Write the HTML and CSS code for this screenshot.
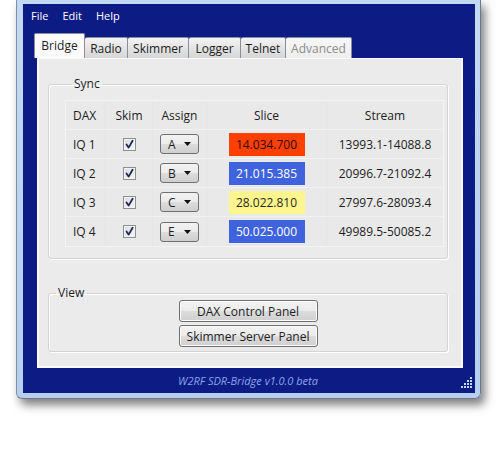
FILE: index.html
```html
<!DOCTYPE html>
<html>
<head>
<meta charset="utf-8">
<link rel="stylesheet" href="styles.css">
</head>
<body>
<div class="window">
  <div class="client">
    <div class="menubar">
      <span class="menu">File</span>
      <span class="menu">Edit</span>
      <span class="menu">Help</span>
    </div>
    <div class="tabs">
      <div class="tab selected t-bridge">Bridge</div>
      <div class="tab t-radio">Radio</div>
      <div class="tab t-skimmer">Skimmer</div>
      <div class="tab t-logger">Logger</div>
      <div class="tab t-telnet">Telnet</div>
      <div class="tab disabled t-adv">Advanced</div>
    </div>
    <div class="panel">
      <fieldset class="group sync">
        <legend>Sync</legend>
        <div class="grid">
          <div class="cell head c-dax">DAX</div>
          <div class="cell head c-mid">Skim</div>
          <div class="cell head c-mid">Assign</div>
          <div class="cell head c-mid">Slice</div>
          <div class="cell head c-mid">Stream</div>

          <div class="cell c-dax">IQ 1</div>
          <div class="cell c-mid"><span class="check"><svg width="11" height="11" viewBox="0 0 11 11"><path d="M2.5 5.5 L4.6 8.6 L8.6 1.8" fill="none" stroke="#1f2a52" stroke-width="1.8" stroke-linecap="round" stroke-linejoin="round"/></svg></span></div>
          <div class="cell c-mid"><span class="combo"><span>A</span><svg width="7" height="4" viewBox="0 0 7 4"><path d="M0 0 H7 L3.5 4 Z" fill="#111"/></svg></span></div>
          <div class="cell c-mid"><span class="slice s-orange">14.034.700</span></div>
          <div class="cell c-mid">13993.1-14088.8</div>

          <div class="cell c-dax">IQ 2</div>
          <div class="cell c-mid"><span class="check"><svg width="11" height="11" viewBox="0 0 11 11"><path d="M2.5 5.5 L4.6 8.6 L8.6 1.8" fill="none" stroke="#1f2a52" stroke-width="1.8" stroke-linecap="round" stroke-linejoin="round"/></svg></span></div>
          <div class="cell c-mid"><span class="combo"><span>B</span><svg width="7" height="4" viewBox="0 0 7 4"><path d="M0 0 H7 L3.5 4 Z" fill="#111"/></svg></span></div>
          <div class="cell c-mid"><span class="slice s-blue">21.015.385</span></div>
          <div class="cell c-mid">20996.7-21092.4</div>

          <div class="cell c-dax">IQ 3</div>
          <div class="cell c-mid"><span class="check"><svg width="11" height="11" viewBox="0 0 11 11"><path d="M2.5 5.5 L4.6 8.6 L8.6 1.8" fill="none" stroke="#1f2a52" stroke-width="1.8" stroke-linecap="round" stroke-linejoin="round"/></svg></span></div>
          <div class="cell c-mid"><span class="combo"><span>C</span><svg width="7" height="4" viewBox="0 0 7 4"><path d="M0 0 H7 L3.5 4 Z" fill="#111"/></svg></span></div>
          <div class="cell c-mid"><span class="slice s-yellow">28.022.810</span></div>
          <div class="cell c-mid">27997.6-28093.4</div>

          <div class="cell c-dax last">IQ 4</div>
          <div class="cell c-mid last"><span class="check"><svg width="11" height="11" viewBox="0 0 11 11"><path d="M2.5 5.5 L4.6 8.6 L8.6 1.8" fill="none" stroke="#1f2a52" stroke-width="1.8" stroke-linecap="round" stroke-linejoin="round"/></svg></span></div>
          <div class="cell c-mid last"><span class="combo"><span>E</span><svg width="7" height="4" viewBox="0 0 7 4"><path d="M0 0 H7 L3.5 4 Z" fill="#111"/></svg></span></div>
          <div class="cell c-mid last"><span class="slice s-blue">50.025.000</span></div>
          <div class="cell c-mid last">49989.5-50085.2</div>
        </div>
      </fieldset>
      <fieldset class="group view">
        <legend>View</legend>
        <div class="buttons">
          <div class="button">DAX Control Panel</div>
          <div class="button">Skimmer Server Panel</div>
        </div>
      </fieldset>
    </div>
    <div class="footer">
      <span></span>
      <span class="status">W2RF SDR-Bridge v1.0.0 beta</span>
      <svg class="grip" width="12" height="12" viewBox="0 0 12 12">
        <g fill="#c6d6f6">
          <rect x="9" y="0" width="2" height="2"/>
          <rect x="6" y="3" width="2" height="2"/><rect x="9" y="3" width="2" height="2"/>
          <rect x="3" y="6" width="2" height="2"/><rect x="6" y="6" width="2" height="2"/><rect x="9" y="6" width="2" height="2"/>
          <rect x="0" y="9" width="2" height="2"/><rect x="3" y="9" width="2" height="2"/><rect x="6" y="9" width="2" height="2"/><rect x="9" y="9" width="2" height="2"/>
        </g>
      </svg>
    </div>
  </div>
</div>
</body>
</html>
```
FILE: styles.css
```css
html, body {
  margin: 0;
  padding: 0;
  background: #ffffff;
}
body {
  width: 499px;
  height: 456px;
  overflow: hidden;
  font-family: "Open Sans", "Noto Sans", "Liberation Sans", sans-serif;
  font-size: 11.5px;
  color: #1e1e1e;
}
.window {
  box-sizing: border-box;
  margin-left: 16px;
  width: 465px;
  height: 399px;
  padding: 4px 5px 5px 6px;
  background: linear-gradient(#c3d9f3, #b6cfee);
  border-left: 1px solid #7f8fa6;
  border-right: 1px solid #6c7a8e;
  border-bottom: 1px solid #6c7a8e;
  border-radius: 0 0 6px 6px;
  box-shadow: 4px 6px 10px rgba(0, 0, 0, 0.5);
}
.client {
  height: 389px;
  background: #0d1b84;
  display: flex;
  flex-direction: column;
}
.menubar {
  height: 22px;
  display: flex;
  align-items: center;
  padding-left: 8px;
  gap: 14px;
  color: #ffffff;
  font-size: 11px;
}
.tabs {
  display: flex;
  align-items: flex-end;
  margin-top: 7px;
  margin-left: 11px;
  height: 25px;
}
.tab {
  box-sizing: border-box;
  height: 21px;
  border: 1px solid #8a8e98;
  border-bottom: none;
  border-left: none;
  border-radius: 2px 2px 0 0;
  background: linear-gradient(#f3f3f3, #e4e4e4 50%, #d6d6d6);
  display: flex;
  align-items: center;
  justify-content: center;
  padding-top: 1px;
  font-size: 12px;
}
.tab.selected {
  height: 25px;
  border-left: 1px solid #8a8e98;
  background: #fbfbfb;
  padding-top: 0;
  padding-bottom: 2px;
}
.t-bridge { width: 51px; }
.t-radio { width: 43px; }
.t-skimmer { width: 61px; }
.t-logger { width: 52px; }
.t-telnet { width: 45px; }
.t-adv { width: 66px; }
.tab.disabled {
  color: #8c8c8c;
  background: linear-gradient(#f7f7f7, #eeeeee);
}
.panel {
  box-sizing: border-box;
  margin-left: 14px;
  width: 426px;
  height: 310px;
  background: #ebebeb;
  border: 2px solid #fbfbfb;
  border-top: 1px solid #fbfbfb;
  padding: 17px 13px 0 9px;
  display: flex;
  flex-direction: column;
  gap: 26px;
}
.group {
  margin: 0;
  border: 1px solid #d3d3d3;
  border-radius: 3px;
  box-shadow: inset 1px 1px 0 #ffffff, 1px 1px 0 #ffffff;
  padding: 0;
  min-width: 0;
}
.group legend {
  padding: 0 2px;
  margin-left: 7px;
  font-size: 12px;
  line-height: 16px;
  color: #1e1e1e;
}
.sync {
  height: 183px;
  box-sizing: border-box;
  padding: 8px 6px 6px 16px;
}
.grid {
  display: grid;
  grid-template-columns: 40px 47px 54px 120px 116px;
  grid-template-rows: 29px repeat(4, 29px);
  width: 377px;
  border: 1px solid #f4f4f4;
  background: #e9e9e9;
}
.cell {
  display: flex;
  align-items: center;
  border-bottom: 1px solid #f2f2f2;
  border-right: 1px solid #e5e5e5;
  font-size: 12px;
}
.cell.last {
  border-bottom: none;
}
.cell:nth-child(5n) {
  border-right: none;
}
.c-dax {
  padding-left: 7px;
}
.c-mid {
  justify-content: center;
}
.check {
  box-sizing: border-box;
  width: 13px;
  height: 13px;
  border: 1px solid #8e8f8f;
  background: linear-gradient(135deg, #dcdcdc, #f6f6f6);
  box-shadow: inset 0 0 0 1px #f4f4f4;
  display: flex;
  align-items: center;
  justify-content: center;
}
.combo {
  box-sizing: border-box;
  width: 39px;
  height: 20px;
  border: 1px solid #707070;
  border-radius: 3px;
  background: linear-gradient(#f2f2f2, #ebebeb 50%, #dddddd 50%, #cfcfcf);
  display: flex;
  align-items: center;
  justify-content: space-between;
  padding: 0 7px 0 7px;
  font-size: 12px;
}
.slice {
  box-sizing: border-box;
  width: 76px;
  height: 23px;
  display: flex;
  align-items: center;
  justify-content: center;
  font-size: 12px;
}
.s-orange { background: #ff4000; color: #2e0a00; }
.s-blue { background: #3f63dd; color: #ffffff; }
.s-yellow { background: #fff58e; color: #2a2a1a; }
.view {
  height: 67px;
  box-sizing: border-box;
  padding: 0 0 5px 0;
}
.buttons {
  display: flex;
  flex-direction: column;
  align-items: center;
  gap: 3px;
  margin-top: -1px;
}
.button {
  box-sizing: border-box;
  width: 139px;
  height: 22px;
  border: 1px solid #707070;
  border-radius: 3px;
  background: linear-gradient(#f2f2f2, #ebebeb 50%, #dddddd 50%, #cfcfcf);
  box-shadow: inset 0 0 0 1px #fbfbfb;
  display: flex;
  align-items: center;
  justify-content: center;
  font-size: 12px;
}
.footer {
  flex: 1;
  display: grid;
  grid-template-columns: 1fr auto 1fr;
  align-items: center;
  padding-right: 2px;
}
.status {
  font-style: italic;
  color: #8aa6ec;
  font-size: 11px;
}
.grip {
  justify-self: end;
  align-self: end;
  margin-bottom: 4px;
}
```
